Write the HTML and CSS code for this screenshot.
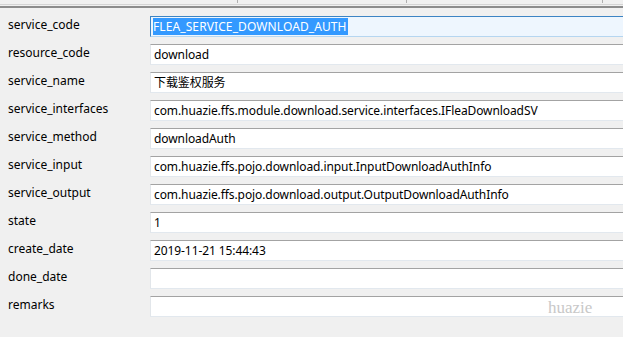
FILE: index.html
```html
<!DOCTYPE html>
<html lang="zh-CN">
<head>
    <meta charset="UTF-8">
    <title>flea_service</title>
    <link rel="stylesheet" href="styles.css">
</head>
<body>
    <div class="grid-head">
        <span class="tick t1"></span>
        <span class="tick t2"></span>
        <span class="tick t3"></span>
    </div>
    <div class="form">
        <div class="label">service_code</div>
        <div class="field focus"><span class="sel">FLEA_SERVICE_DOWNLOAD_AUTH</span></div>

        <div class="label">resource_code</div>
        <div class="field">download</div>

        <div class="label">service_name</div>
        <div class="field">下载鉴权服务</div>

        <div class="label">service_interfaces</div>
        <div class="field">com.huazie.ffs.module.download.service.interfaces.IFleaDownloadSV</div>

        <div class="label">service_method</div>
        <div class="field">downloadAuth</div>

        <div class="label">service_input</div>
        <div class="field">com.huazie.ffs.pojo.download.input.InputDownloadAuthInfo</div>

        <div class="label">service_output</div>
        <div class="field">com.huazie.ffs.pojo.download.output.OutputDownloadAuthInfo</div>

        <div class="label">state</div>
        <div class="field">1</div>

        <div class="label">create_date</div>
        <div class="field">2019-11-21 15:44:43</div>

        <div class="label">done_date</div>
        <div class="field"></div>

        <div class="label">remarks</div>
        <div class="field"></div>
    </div>
    <div class="mark">huazie</div>
</body>
</html>
```

FILE: styles.css
```css
* {
    margin: 0;
    padding: 0;
    box-sizing: border-box;
}
body {
    background: #f0f0f0;
    color: #000;
    font-family: 'Noto Sans', 'Noto Sans CJK SC', sans-serif;
    font-size: 12px;
    width: 623px;
    height: 337px;
    overflow: hidden;
    position: relative;
}
.grid-head {
    height: 8px;
    position: relative;
    border-bottom: 2px solid #8c8c8c;
}
.grid-head::after {
    content: '';
    position: absolute;
    left: 0;
    right: 0;
    top: 4px;
    height: 1px;
    background: #d4d4d4;
}
.tick {
    position: absolute;
    top: 0;
    width: 1px;
    height: 3px;
    background: #b0b0b0;
}
.t1 { left: 237px; }
.t2 { left: 406px; }
.t3 { left: 602px; }
.form {
    display: grid;
    grid-template-columns: 150px 1fr;
    grid-auto-rows: 21px;
    row-gap: 7px;
    margin-top: 8px;
}
.label {
    padding-left: 8px;
    padding-top: 1px;
    line-height: 16px;
    color: #000;
}
.field {
    background: #fff;
    border-top: 1px solid #a3a3a3;
    border-left: 1px solid #e2e6ea;
    border-bottom: 1px solid #e2e8ee;
    line-height: 19px;
    padding-left: 3px;
    letter-spacing: -0.09px;
    white-space: nowrap;
    overflow: hidden;
    position: relative;
}
.field::before {
    content: '';
    position: absolute;
    left: -1px;
    top: 0;
    width: 1px;
    height: 2px;
    background: #555;
}
.field.focus {
    background: #eef6fe;
    border-top-color: #3c84c4;
    border-left-color: #3c84c4;
    border-bottom-color: #b6d6f0;
    padding-left: 2px;
    padding-top: 1px;
    letter-spacing: 0.1px;
}
.field.focus::before {
    display: none;
}
.sel {
    background: #3399ff;
    color: #fff;
    display: inline-block;
    line-height: 17px;
    vertical-align: top;
    padding-right: 1px;
}
.mark {
    position: absolute;
    left: 548px;
    top: 298px;
    font-family: 'Liberation Serif', serif;
    font-size: 17px;
    color: #c8c8c8;
}
```
